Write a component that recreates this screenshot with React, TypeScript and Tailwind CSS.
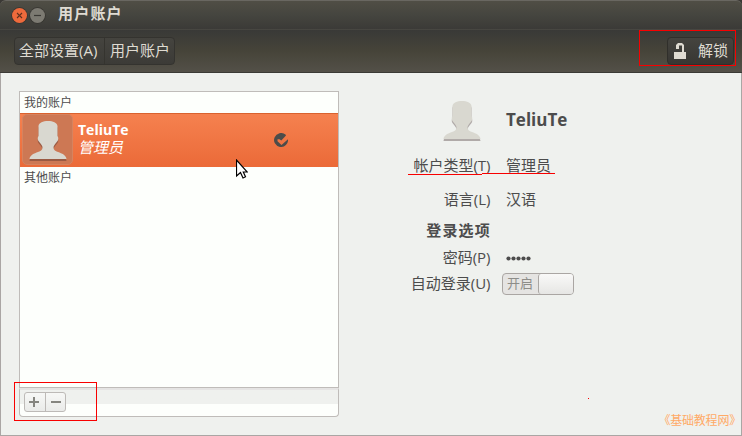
import React from "react";

const FONT = "font-['Open_Sans','Noto_Sans_CJK_SC',sans-serif]";

function Person({ className, shade }: { className: string; shade: string }) {
  const d =
    "M19 0C14 0 10 1.500 9.500 5V15C8.500 16 8.500 19 9.500 20C11 22 13 24 13.500 26C13.500 29 12 30 9 31C5 32.500 1 34 0.500 38H37.500C37 34 33 32.500 29 31C26 30 24.500 29 24.500 26C25 24 27 22 28.500 20C29.500 19 29.500 16 28.500 15V5C28 1.500 24 0 19 0Z";
  return (
    <svg className={className} viewBox="0 0 39 40" preserveAspectRatio="none">
      <path d={d} fill={shade} transform="translate(0 2)" />
      <path d={d} fill="#d9d8d0" />
    </svg>
  );
}

function Cell({ children, className }: { children: React.ReactNode; className: string }) {
  return <div className={`flex items-center whitespace-nowrap ${className}`}>{children}</div>;
}

function Row({ label, height, bold, children }: { label: string; height: string; bold?: boolean; children?: React.ReactNode }) {
  return (
    <div className={`flex items-center whitespace-nowrap text-[15px] leading-none text-[#4c4c4c] ${height}`}>
      <div className={bold ? "w-[91px] text-right font-bold tracking-[1.2px]" : "w-[90.5px] text-right"}>{label}</div>
      <div className={bold ? "" : "ml-[15.5px] flex"}>{children}</div>
    </div>
  );
}

export default function App() {
  return (
    <div className={`relative flex h-[436px] w-[742px] flex-col overflow-hidden bg-[#3b3935] ${FONT}`}>
      <header className="flex h-[29px] shrink-0 items-center rounded-t-md border-t border-[#696761] bg-linear-to-b from-[#504e45] via-[#45453f] to-[#3b3a37] pl-[11px]">
        <svg className="h-[18px] w-[36px]" viewBox="0 0 36 18">
          <circle cx="8.500" cy="9.500" r="8.200" fill="#35332f" />
          <circle cx="8.500" cy="9.500" r="7.500" fill="#ee6a3c" />
          <path d="M6 7l5 5M11 7l-5 5" stroke="#60311f" strokeWidth="1.100" />
          <circle cx="26.500" cy="9.500" r="8.200" fill="#35332f" />
          <circle cx="26.500" cy="9.500" r="7.500" fill="#7c7a72" />
          <path d="M23 9.500h7" stroke="#3b3935" strokeWidth="1.200" />
        </svg>
        <h1 className="ml-[11px] pb-[4px] text-[15px] leading-none font-bold tracking-[1.2px] text-[#dfdbd2]">用户账户</h1>
      </header>

      <nav className="flex h-[44px] shrink-0 items-start justify-between border-t border-b border-t-[#474641] border-b-[#3b3a36] bg-linear-to-b from-[#393937] via-[#464439] to-[#535048] pt-[7px] pr-[8px] pl-[14px] text-[15px] leading-none text-[#dfdbd2]">
        <div className="flex h-[28px] w-[161px] rounded border border-[#34332f] bg-linear-to-b from-[#45443f] to-[#3c3b37]">
          <Cell className="w-[90px] border-r border-[#35342f] pb-[2px] pl-[4px]">全部设置(A)</Cell>
          <Cell className="flex-1 pb-[2px] pl-[5px]">用户账户</Cell>
        </div>
        <div className="flex h-[28px] w-[67px] items-center rounded border border-[#302f2b] bg-linear-to-b from-[#45443f] to-[#383733] pl-[6px]">
          <svg className="h-[16px] w-[13px]" viewBox="0 0 13 16">
            <path d="M0 9h8V2.500H5V6H2V2L4 0h4l2 2v7h2v7H0z" fill="#dfdbd2" />
          </svg>
          <span className="ml-[11px] pb-[2px]">解锁</span>
        </div>
      </nav>

      <main className="flex flex-1 items-start border-x border-b border-[#aaa6a4] bg-[#eff1ee] pt-[18px] pl-[18px]">
        <section className="flex w-[320px] flex-col">
          <div className="h-[297px] border border-[#bfbcb9] bg-[#fdfffc] text-xs text-[#4c4c4c]">
            <Cell className="h-[21px] pl-[4px]">我的账户</Cell>
            <div className="flex h-[54px] items-center border-t border-[#d9622f] bg-linear-to-b from-[#f5814f] to-[#eb6a38] pl-[2px] text-white">
              <div className="mb-[2px] flex h-[51px] w-[51px] items-center justify-center rounded-[5px] border border-[#d5835f] bg-[#cd7854]">
                <Person className="mt-[2px] ml-[1px] h-[40px] w-[39px]" shade="#9a5a43" />
              </div>
              <div className="mb-[5px] ml-[5px] w-[196px]">
                <div className="h-[18px] text-[14px] leading-[18px] font-bold">TeliuTe</div>
                <div className="h-[16px] text-[15px] leading-[16px] italic">管理员</div>
              </div>
              <svg className="mb-[2px] h-[14px] w-[14px]" viewBox="0 0 14 14">
                <path d="M11.500 1.600A7 7 0 1 0 14 6.200L7.500 12L3.500 8.200V6.200H5.500L7.300 7.500L12 2.500Z" fill="#4c4c4a" />
              </svg>
            </div>
            <Cell className="h-[21px] pl-[4px]">其他账户</Cell>
          </div>
          <div className="h-[29px] rounded-b border border-t-2 border-[#bfbcb9] border-t-[#e5e4e3] bg-linear-to-b from-[#eff1ee] from-[14px] to-[#fdfffc] to-[14px] pt-[2px] pl-[4px]">
            <div className="flex h-[20px] w-[42px] rounded-[3px] border border-[#bdbab7] bg-linear-to-b from-[#f7f8f6] to-[#eaebe9]">
              <div className="flex w-[21px] items-center justify-center border-r border-[#bdbab7] pr-[2px]">
                <svg className="h-[10px] w-[10px]" viewBox="0 0 10 10"><path d="M4 0h2v4h4v2H6v4H4V6H0V4h4z" fill="#85857f" /></svg>
              </div>
              <div className="flex flex-1 items-center justify-center">
                <svg className="h-[10px] w-[10px]" viewBox="0 0 10 10"><path d="M0 4h10v2H0z" fill="#85857f" /></svg>
              </div>
            </div>
          </div>
        </section>

        <section className="ml-[61px] pt-[10px]">
          <div className="flex h-[47px] items-start pl-[43px]">
            <Person className="h-[40px] w-[39px]" shade="#b0aaa8" />
            <h2 className="ml-[24px] pt-[10px] text-[17px] leading-none font-bold text-[#4c4c4c]">TeliuTe</h2>
          </div>
          <Row label="帐户类型(T)" height="h-[34px]">管理员</Row>
          <Row label="语言(L)" height="h-[34px]">汉语</Row>
          <Row label="登录选项" height="h-[28px]" bold />
          <Row label="密码(P)" height="h-[26px]">
            <svg className="mt-[2px] h-[5px] w-[26px]" viewBox="0 0 26 5" fill="#4c4c4c">
              <circle cx="2.500" cy="2.500" r="2.100" /><circle cx="7.500" cy="2.500" r="2.100" /><circle cx="12.500" cy="2.500" r="2.100" /><circle cx="17.500" cy="2.500" r="2.100" /><circle cx="22.500" cy="2.500" r="2.100" />
            </svg>
          </Row>
          <Row label="自动登录(U)" height="h-[26px]">
            <div className="mt-[2px] -ml-[4px] flex h-[22px] w-[72px] rounded border border-[#aaa6a3] bg-[#e5e4e2]">
              <Cell className="w-[35px] pb-[2px] pl-[4px] text-[13px] text-[#8d8d89]">开启</Cell>
              <div className="flex-1 rounded-[3px] border-l border-[#aaa6a3] bg-linear-to-b from-[#f9f9f8] to-[#e6e6e4]" />
            </div>
          </Row>
        </section>
      </main>

      <div className="absolute top-[30px] left-[639px] h-[36px] w-[97px] border border-[#f80000]" />
      <div className="absolute top-[382px] left-[14px] h-[39px] w-[83px] border border-[#f80000]" />
      <div className="absolute top-[174px] left-[408px] h-px w-[74px] bg-[#f80000]" />
      <div className="absolute top-[173px] left-[482px] h-px w-[73px] bg-[#f80000]" />
      <div className="absolute top-[398px] left-[588px] h-px w-px bg-[#f80000]" />
      <div className="absolute right-px bottom-[9px] text-[12px] leading-[13px] tracking-[-0.2px] whitespace-nowrap text-[#ffaa66]">《基础教程网》</div>
      <svg className="absolute top-[159px] left-[236px] h-[20px] w-[12px]" viewBox="0 0 12 20">
        <path d="M.5 1v16l4-3.500 2.500 5.500 2.500-1.200-2.200-4.800h4z" fill="#fff" stroke="#000" strokeWidth="1.200" />
      </svg>
    </div>
  );
}
